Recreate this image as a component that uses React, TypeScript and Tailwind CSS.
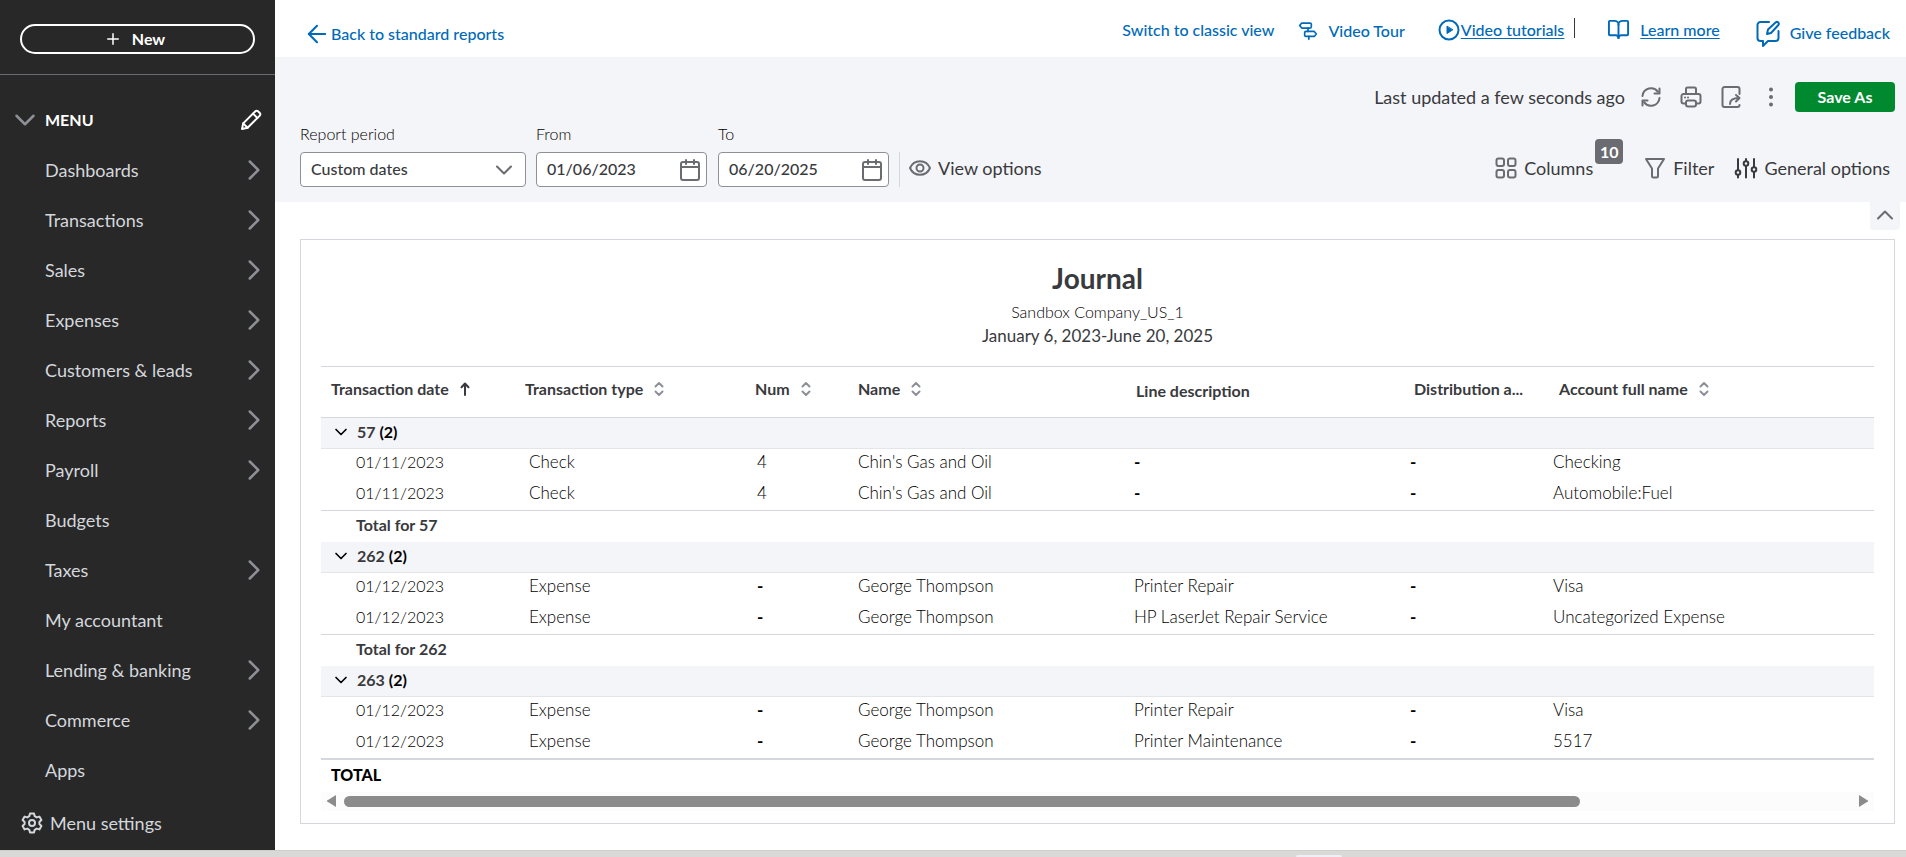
import { ArrowLeft, BookOpen, ChevronDown, ChevronRight, ChevronUp, Plus } from 'lucide-react'
import type React from 'react'

const MENU_ITEMS = [
  { label: 'Dashboards', expandable: true },
  { label: 'Transactions', expandable: true },
  { label: 'Sales', expandable: true },
  { label: 'Expenses', expandable: true },
  { label: 'Customers & leads', expandable: true },
  { label: 'Reports', expandable: true },
  { label: 'Payroll', expandable: true },
  { label: 'Budgets', expandable: false },
  { label: 'Taxes', expandable: true },
  { label: 'My accountant', expandable: false },
  { label: 'Lending & banking', expandable: true },
  { label: 'Commerce', expandable: true },
  { label: 'Apps', expandable: false },
]

type Sort = 'asc' | 'both' | 'none'

const COLUMNS: { label: string; sort: Sort; col: string; head: string }[] = [
  { label: 'Transaction date', sort: 'asc', col: 'w-[198px]', head: 'pl-2.5 pb-1.5' },
  { label: 'Transaction type', sort: 'both', col: 'w-[228px]', head: 'pl-1.5 pb-1.5' },
  { label: 'Num', sort: 'both', col: 'w-[101px]', head: 'pl-2 pb-1.5' },
  { label: 'Name', sort: 'both', col: 'w-[276px]', head: 'pl-2.5 pb-1.5' },
  { label: 'Line description', sort: 'none', col: 'w-[276px]', head: 'pl-3 pb-0.5' },
  { label: 'Distribution a...', sort: 'none', col: 'w-[143px]', head: 'pl-3.5 pb-1.5' },
  { label: 'Account full name', sort: 'both', col: '', head: 'pl-4 pb-1.5' },
]

const GROUPS = [
  {
    id: '57',
    total: true,
    rows: [
      ['01/11/2023', 'Check', '4', "Chin's Gas and Oil", '', '', 'Checking'],
      ['01/11/2023', 'Check', '4', "Chin's Gas and Oil", '', '', 'Automobile:Fuel'],
    ],
  },
  {
    id: '262',
    total: true,
    rows: [
      ['01/12/2023', 'Expense', '', 'George Thompson', 'Printer Repair', '', 'Visa'],
      ['01/12/2023', 'Expense', '', 'George Thompson', 'HP LaserJet Repair Service', '', 'Uncategorized Expense'],
    ],
  },
  {
    id: '263',
    total: false,
    rows: [
      ['01/12/2023', 'Expense', '', 'George Thompson', 'Printer Repair', '', 'Visa'],
      ['01/12/2023', 'Expense', '', 'George Thompson', 'Printer Maintenance', '', '5517'],
    ],
  },
]

interface IconProps {
  className?: string
  children: React.ReactNode
  viewBox?: string
}

const Icon: React.FC<IconProps> = ({ className = 'size-6', children, viewBox = '0 0 24 24' }) => (
  <svg
    viewBox={viewBox}
    className={`shrink-0 ${className}`}
    fill="none"
    stroke="currentColor"
    strokeWidth="2"
    strokeLinecap="round"
    strokeLinejoin="round"
    aria-hidden="true"
  >
    {children}
  </svg>
)

const PencilIcon = () => (
  <Icon>
    <path d="M3 21l1.2-5.6L16.4 3.2a1.8 1.8 0 0 1 2.6 0l1.8 1.8a1.8 1.8 0 0 1 0 2.6L8.6 19.8z" />
    <path d="M14 5.6l4.4 4.4M4.2 15.4l4.4 4.4" />
  </Icon>
)

const GearIcon = () => (
  <Icon>
    <circle cx="12" cy="12" r="3" />
    <path d="M10 2.5h4l.7 2.7 2 1.2 2.7-.8 2 3.4-2 2v2l2 2-2 3.4-2.7-.8-2 1.2-.7 2.7h-4l-.7-2.7-2-1.2-2.7.8-2-3.4 2-2v-2l-2-2 2-3.4 2.7.8 2-1.2z" />
  </Icon>
)

const SignpostIcon = () => (
  <Icon className="size-5">
    <path d="M4.5 2.5h10A1.5 1.5 0 0 1 16 4v3a1.5 1.5 0 0 1-1.5 1.5h-10L2 5.5z" />
    <path d="M9.5 12.5h10l2.5 3-2.5 3h-10A1.5 1.5 0 0 1 8 17v-3a1.5 1.5 0 0 1 1.5-1.5z" />
    <path d="M12 8.5v4M13 18.5v3.5" />
  </Icon>
)

const PlayIcon = () => (
  <Icon>
    <circle cx="12" cy="12" r="9.5" />
    <path d="M10 8.5v7l5.500-3.500z" fill="currentColor" strokeWidth="1" />
  </Icon>
)

const FeedbackIcon = () => (
  <Icon className="h-7 w-6" viewBox="0 0 24 28">
    <path d="M13 3H4.5a3 3 0 0 0-3 3v13a3 3 0 0 0 3 3H7v5l5-5h7.5a3 3 0 0 0 3-3v-7" />
    <path d="M11 15l1-4.5 7.8-7.2a1.9 1.9 0 0 1 2.6 2.7L15 14z" />
  </Icon>
)

const RefreshIcon = () => (
  <Icon>
    <path d="M3.5 11A8.6 8.6 0 0 1 19 6.8M20.5 13A8.6 8.6 0 0 1 5 17.2" />
    <path d="M20.5 3.5v5h-5M3.5 20.5v-5h5" />
  </Icon>
)

const PrinterIcon = () => (
  <Icon>
    <path d="M7 9V4a1.5 1.5 0 0 1 1.5-1.5h7A1.5 1.5 0 0 1 17 4v5" />
    <path d="M7 18.5H4.5a2 2 0 0 1-2-2V11a2 2 0 0 1 2-2h15a2 2 0 0 1 2 2v5.5a2 2 0 0 1-2 2H17" />
    <rect x="7" y="15.5" width="10" height="6" rx="2" />
    <path d="M6 12.5h.01M9 12.5h.01" />
  </Icon>
)

const ExportIcon = () => (
  <Icon>
    <path d="M20.5 9V4a2 2 0 0 0-2-2h-13a2 2 0 0 0-2 2v16a2 2 0 0 0 2 2h13a2 2 0 0 0 2-2" />
    <path d="M11 19c0-4 2.5-6 9-6M17 10l3.5 3-3.5 3.5" />
  </Icon>
)

const KebabIcon = () => (
  <Icon>
    <g fill="currentColor" stroke="none">
      <circle cx="12" cy="4.500" r="2" />
      <circle cx="12" cy="12" r="2" />
      <circle cx="12" cy="19.500" r="2" />
    </g>
  </Icon>
)

const CalendarIcon = () => (
  <Icon>
    <rect x="3" y="4" width="18" height="18" rx="2" />
    <path d="M3 9h18M8 2v4M16 2v4" />
  </Icon>
)

const EyeIcon = () => (
  <Icon>
    <path d="M2 12c2-4.5 5.7-6.8 10-6.8S20 7.5 22 12c-2 4.5-5.7 6.8-10 6.8S4 16.500 2 12z" />
    <circle cx="12" cy="12" r="3.5" />
  </Icon>
)

const GridIcon = () => (
  <Icon>
    <rect x="2.5" y="2.5" width="7.5" height="7.5" rx="2" />
    <rect x="14" y="2.5" width="7.5" height="7.5" rx="2" />
    <rect x="2.5" y="14" width="7.5" height="7.5" rx="2" />
    <rect x="14" y="14" width="7.5" height="7.5" rx="2" />
  </Icon>
)

const FunnelIcon = () => (
  <Icon>
    <path d="M3 3h18l-6 9.5V20a1.5 1.5 0 0 1-1.5 1.5h-3A1.5 1.5 0 0 1 9 20v-7.500z" />
  </Icon>
)

const SlidersIcon = () => (
  <Icon>
    <path d="M4 3v11M4 19v2.5M12 3v2M12 10v11.5M20 3v8M20 16v5.5" />
    <circle cx="4" cy="16.5" r="2.3" />
    <circle cx="12" cy="7.5" r="2.3" />
    <circle cx="20" cy="13.5" r="2.3" />
  </Icon>
)

const SortIcon: React.FC<{ sort: Sort }> = ({ sort }) => {
  if (sort === 'asc') {
    return (
      <Icon className="h-4 w-3" viewBox="0 0 12 16">
        <path d="M6 14V3M2.5 6.2L6 2.5l3.5 3.7" />
      </Icon>
    )
  }
  return (
    <Icon className="h-4 w-3 text-[#8d9096]" viewBox="0 0 12 16">
      <path d="M2.5 5.5L6 2l3.5 3.5M2.5 10.5L6 14l3.5-3.5" />
    </Icon>
  )
}

const Sidebar = () => (
  <aside className="flex w-[275px] shrink-0 flex-col bg-[#282828] text-[#d4d7dc]">
    <div className="border-b border-[#6b6c72] px-5 pt-6 pb-5">
      <button className="flex h-[30px] w-full items-center justify-center gap-2.5 rounded-full border-2 border-white pr-1.5 text-base font-bold text-white">
        <Plus size={18} />
        New
      </button>
    </div>
    <div className="mt-5 flex h-[50px] items-center pr-3 pl-2">
      <button className="flex flex-1 items-center gap-[3px] text-base font-bold text-white">
        <ChevronDown size={34} strokeWidth={1.75} className="text-[#8d9096]" />
        MENU
      </button>
      <button className="text-white" aria-label="Edit menu">
        <PencilIcon />
      </button>
    </div>
    <nav>
      <ul>
        {MENU_ITEMS.map((item) => (
          <li key={item.label}>
            <a href="#" className="flex h-[50px] items-center justify-between pr-1 pl-[45px] text-lg">
              {item.label}
              {item.expandable && <ChevronRight size={34} strokeWidth={1.75} className="text-[#8d9096]" />}
            </a>
          </li>
        ))}
      </ul>
    </nav>
    <button className="flex h-[55px] items-center gap-1.5 pl-5 text-lg">
      <GearIcon />
      Menu settings
    </button>
  </aside>
)

const TopBar = () => (
  <header className="flex h-[57px] shrink-0 items-center justify-between pt-0.5 pr-4 pl-7 text-base font-medium text-[#006ab8]">
    <a href="#" className="flex items-center pt-2">
      <ArrowLeft size={28} strokeWidth={1.75} />
      Back to standard reports
    </a>
    <div className="flex items-center">
      <a href="#">Switch to classic view</a>
      <a href="#" className="ml-6 flex items-center gap-2.5 pt-0.5">
        <SignpostIcon />
        Video Tour
      </a>
      <a href="#" className="ml-8 flex items-center">
        <PlayIcon />
        <span className="underline underline-offset-2">Video tutorials</span>
      </a>
      <span className="mr-8 mb-1 ml-2.5 h-5 w-px bg-[#393a3d]" />
      <a href="#" className="flex items-center gap-2.5">
        <BookOpen size={23} />
        <span className="underline underline-offset-2">Learn more</span>
      </a>
      <a href="#" className="ml-9 flex items-center gap-2.5 pt-1.5">
        <FeedbackIcon />
        Give feedback
      </a>
    </div>
  </header>
)

const DateField: React.FC<{ id: string; label: string; value: string }> = ({ id, label, value }) => (
  <div className="flex flex-col gap-1.5">
    <label htmlFor={id} className="text-base leading-6 font-light text-black">
      {label}
    </label>
    <div className="flex h-[35px] w-[171px] items-center rounded border border-[#8d9096] bg-white pr-1">
      <input id={id} defaultValue={value} className="w-full min-w-0 pb-0.5 pl-2.5 text-base font-medium outline-none" />
      <button className="text-[#6b6c72]" aria-label={`${label} calendar`}>
        <CalendarIcon />
      </button>
    </div>
  </div>
)

const Toolbar = () => (
  <section className="bg-[#f4f5f8] pt-[25px] pb-[15px] pl-[25px] text-[#393a3d]">
    <div className="flex items-center justify-end pr-[11px] text-[#6b6c72]">
      <span className="text-lg leading-6 text-[#393a3d]">Last updated a few seconds ago</span>
      <div className="ml-3.5 flex gap-4">
        <button aria-label="Refresh">
          <RefreshIcon />
        </button>
        <button aria-label="Print">
          <PrinterIcon />
        </button>
        <button aria-label="Export">
          <ExportIcon />
        </button>
        <button aria-label="More actions">
          <KebabIcon />
        </button>
      </div>
      <button className="ml-3 h-[30px] w-[100px] rounded bg-[#00892e] text-base font-bold text-white">Save As</button>
    </div>
    <div className="mt-[10px] flex items-end justify-between pr-4">
      <div className="flex items-end">
        <div className="flex flex-col gap-1.5">
          <label htmlFor="report-period" className="text-base leading-6 font-light text-black">
            Report period
          </label>
          <div className="relative">
            <select
              id="report-period"
              className="h-[35px] w-[226px] appearance-none rounded border border-[#8d9096] bg-white pb-0.5 pl-2.5 text-base font-medium"
            >
              <option>Custom dates</option>
            </select>
            <ChevronDown
              size={28}
              strokeWidth={1.75}
              className="pointer-events-none absolute top-1 right-2 text-[#6b6c72]"
            />
          </div>
        </div>
        <div className="ml-2.5 flex gap-[11px]">
          <DateField id="from-date" label="From" value="01/06/2023" />
          <DateField id="to-date" label="To" value="06/20/2025" />
        </div>
        <button className="ml-2.5 flex h-[35px] items-center gap-1.5 border-l border-[#d4d7dc] pb-1 pl-2 text-lg">
          <span className="text-[#6b6c72]">
            <EyeIcon />
          </span>
          View options
        </button>
      </div>
      <div className="flex h-[35px] items-center gap-5 pb-1 text-lg">
        <button className="flex items-center gap-1.5">
          <span className="text-[#6b6c72]">
            <GridIcon />
          </span>
          Columns
          <span className="-ml-1 mb-8 flex h-[25px] w-7 items-center justify-center rounded bg-[#6b6c72] text-base font-bold text-white">
            10
          </span>
        </button>
        <button className="flex items-center gap-1.5">
          <span className="text-[#6b6c72]">
            <FunnelIcon />
          </span>
          Filter
        </button>
        <button className="flex items-center gap-1.5">
          <SlidersIcon />
          General options
        </button>
      </div>
    </div>
  </section>
)

const JournalTable = () => (
  <table className="w-full table-fixed border-collapse text-left text-base text-[#393a3d]">
    <colgroup>
      {COLUMNS.map((c) => (
        <col key={c.label} className={c.col} />
      ))}
    </colgroup>
    <thead>
      <tr className="h-[51px] border-y border-[#d4d7dc]">
        {COLUMNS.map((c) => (
          <th key={c.label} className={`font-bold ${c.head}`}>
            {c.sort === 'none' ? (
              c.label
            ) : (
              <button className="flex items-center gap-2.5">
                {c.label}
                <SortIcon sort={c.sort} />
              </button>
            )}
          </th>
        ))}
      </tr>
    </thead>
    {GROUPS.map((group) => (
      <tbody key={group.id}>
        <tr className="h-[31px] border-b border-[#e3e5e8] bg-[#f4f5f8]">
          <th colSpan={7} className="pb-0.5 pl-2.5 font-bold">
            <button className="flex items-center gap-1.5">
              <ChevronDown size={20} className="text-black" />
              <span>
                {group.id} <span className="text-black">(2)</span>
              </span>
            </button>
          </th>
        </tr>
        {group.rows.map((row, i) => (
          <tr key={i} className="h-[31px] text-[17px] leading-6 font-light text-black">
            {row.map((cell, j) => (
              <td key={j} className={j === 0 ? 'pb-1 pl-[35px] text-base' : 'pb-1 pl-2.5'}>
                {cell || <span className="font-bold">-</span>}
              </td>
            ))}
          </tr>
        ))}
        {group.total && (
          <tr className="h-[31px] border-t border-[#d4d7dc]">
            <th colSpan={7} className="pb-0.5 pl-[35px] font-bold">
              Total for {group.id}
            </th>
          </tr>
        )}
      </tbody>
    ))}
    <tfoot>
      <tr className="h-[33px] border-t-2 border-[#d4d7dc]">
        <th colSpan={7} className="pb-0.5 pl-2.5 font-black text-black">
          TOTAL
        </th>
      </tr>
    </tfoot>
  </table>
)

const HorizontalScroll = () => (
  <div className="flex h-[19px] items-center bg-[#fcfcfc] px-1.5 text-[#8b8b8b]">
    <button aria-label="Scroll left">
      <svg viewBox="0 0 9 12" className="h-3 w-[9px]" fill="currentColor">
        <path d="M9 0v12L1 7a1 1 0 0 1 0-2z" />
      </svg>
    </button>
    <div className="mx-2 flex-1">
      <div className="h-[11px] w-[82%] rounded-full bg-[#8b8b8b]" />
    </div>
    <button aria-label="Scroll right">
      <svg viewBox="0 0 9 12" className="h-3 w-[9px]" fill="currentColor">
        <path d="M0 0v12l8-5a1 1 0 0 0 0-2z" />
      </svg>
    </button>
  </div>
)

const App: React.FC = () => {
  return (
    <div className="flex min-h-screen flex-col bg-white font-['Lato','Liberation_Sans',sans-serif]">
      <div className="flex flex-1">
        <Sidebar />
        <main className="flex min-w-0 flex-1 flex-col">
          <TopBar />
          <Toolbar />
          <div className="flex justify-end pr-1.5">
            <button
              className="flex h-7 w-[30px] items-center justify-center rounded-b bg-[#f4f5f8] pb-0.5 text-[#6b6c72]"
              aria-label="Collapse toolbar"
            >
              <ChevronUp size={28} strokeWidth={1.75} />
            </button>
          </div>
          <section className="mt-[9px] mr-[11px] ml-[25px] border border-[#d4d7dc] px-5 pb-3">
            <div className="flex flex-col items-center pt-[22px] pb-5 text-[#393a3d]">
              <h1 className="text-[28px] leading-8 font-bold">Journal</h1>
              <p className="mt-1 text-base leading-7 font-light text-black">Sandbox Company_US_1</p>
              <p className="text-[17px] leading-5">January 6, 2023-June 20, 2025</p>
            </div>
            <JournalTable />
            <HorizontalScroll />
          </section>
        </main>
      </div>
      <footer className="flex h-[7px] items-end border-t border-[#cfcfce] bg-[#d9d9d7] pl-[68%]">
        <div className="h-0.5 w-[46px] rounded-t bg-[#f0f0f4]" />
      </footer>
    </div>
  )
}

export default App
